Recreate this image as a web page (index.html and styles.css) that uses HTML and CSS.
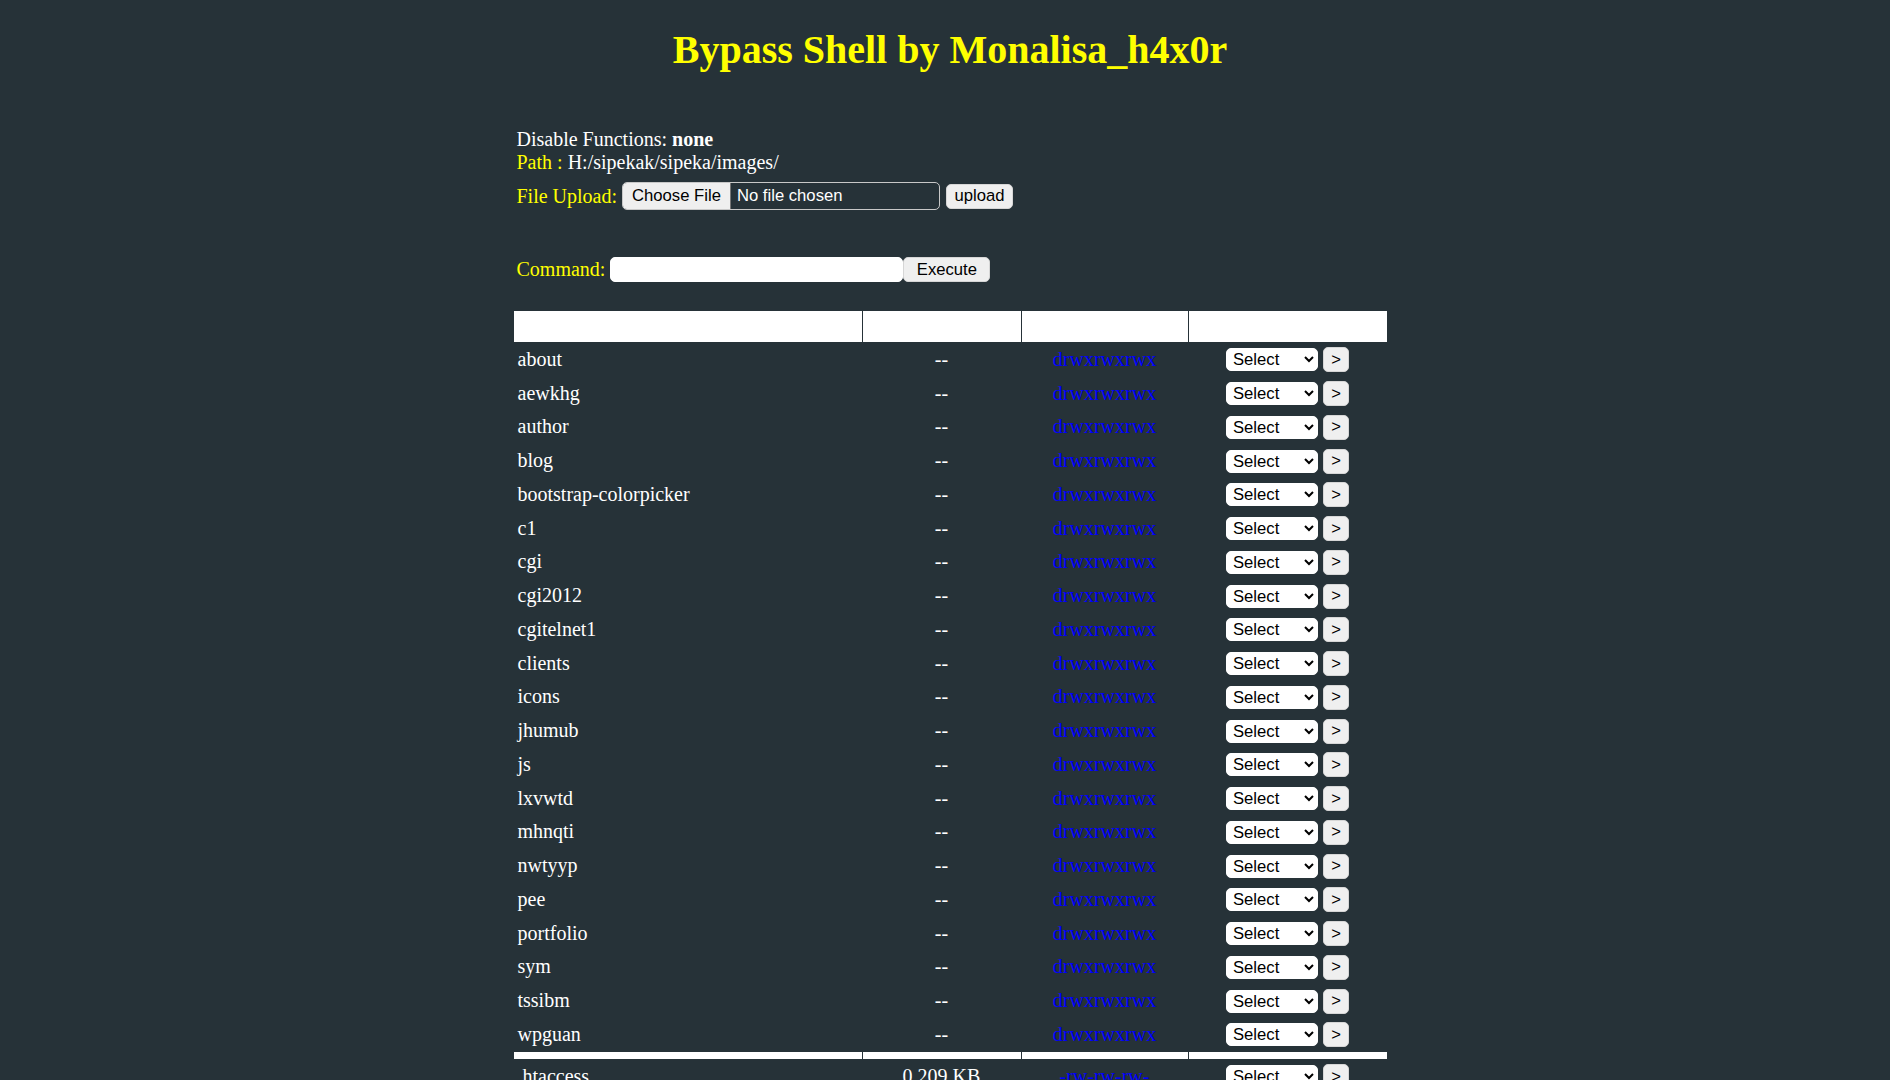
FILE: index.html
```html
<!DOCTYPE html>
<html lang="en">
<head>
  <meta charset="UTF-8">
  <meta name="viewport" content="width=device-width, initial-scale=1.0">
  <title>Bypass Shell</title>
  <link rel="stylesheet" href="styles.css">
</head>
<body>
  <h1 class="title">Bypass Shell by Monalisa_h4x0r</h1>

  <div class="wrap">
    <!-- Server info -->
    <div class="info">
      <div>Disable Functions: <b>none</b></div>
      <div><span class="label">Path :</span> H:/sipekak/sipeka/images/</div>
    </div>

    <form class="row upload" enctype="multipart/form-data" method="post">
      <span class="label">File Upload:</span>
      <input type="file" name="file" class="file">
      <input type="submit" value="upload" class="btn">
    </form>

    <form class="row command" method="post">
      <span class="label">Command:</span>
      <input type="text" name="cmd" class="cmd"><input type="submit" value="Execute" class="btn exec">
    </form>

    <!-- Directory listing -->
    <table class="files">
      <tr class="head">
        <th class="c-name"></th>
        <th class="c-size"></th>
        <th class="c-perm"></th>
        <th class="c-act"></th>
      </tr>
      <tr><td>about</td><td class="mid">--</td><td class="mid"><a href="#">drwxrwxrwx</a></td><td class="mid"><select><option>Select</option><option>Rename</option><option>Delete</option></select> <button>&gt;</button></td></tr>
      <tr><td>aewkhg</td><td class="mid">--</td><td class="mid"><a href="#">drwxrwxrwx</a></td><td class="mid"><select><option>Select</option><option>Rename</option><option>Delete</option></select> <button>&gt;</button></td></tr>
      <tr><td>author</td><td class="mid">--</td><td class="mid"><a href="#">drwxrwxrwx</a></td><td class="mid"><select><option>Select</option><option>Rename</option><option>Delete</option></select> <button>&gt;</button></td></tr>
      <tr><td>blog</td><td class="mid">--</td><td class="mid"><a href="#">drwxrwxrwx</a></td><td class="mid"><select><option>Select</option><option>Rename</option><option>Delete</option></select> <button>&gt;</button></td></tr>
      <tr><td>bootstrap-colorpicker</td><td class="mid">--</td><td class="mid"><a href="#">drwxrwxrwx</a></td><td class="mid"><select><option>Select</option><option>Rename</option><option>Delete</option></select> <button>&gt;</button></td></tr>
      <tr><td>c1</td><td class="mid">--</td><td class="mid"><a href="#">drwxrwxrwx</a></td><td class="mid"><select><option>Select</option><option>Rename</option><option>Delete</option></select> <button>&gt;</button></td></tr>
      <tr><td>cgi</td><td class="mid">--</td><td class="mid"><a href="#">drwxrwxrwx</a></td><td class="mid"><select><option>Select</option><option>Rename</option><option>Delete</option></select> <button>&gt;</button></td></tr>
      <tr><td>cgi2012</td><td class="mid">--</td><td class="mid"><a href="#">drwxrwxrwx</a></td><td class="mid"><select><option>Select</option><option>Rename</option><option>Delete</option></select> <button>&gt;</button></td></tr>
      <tr><td>cgitelnet1</td><td class="mid">--</td><td class="mid"><a href="#">drwxrwxrwx</a></td><td class="mid"><select><option>Select</option><option>Rename</option><option>Delete</option></select> <button>&gt;</button></td></tr>
      <tr><td>clients</td><td class="mid">--</td><td class="mid"><a href="#">drwxrwxrwx</a></td><td class="mid"><select><option>Select</option><option>Rename</option><option>Delete</option></select> <button>&gt;</button></td></tr>
      <tr><td>icons</td><td class="mid">--</td><td class="mid"><a href="#">drwxrwxrwx</a></td><td class="mid"><select><option>Select</option><option>Rename</option><option>Delete</option></select> <button>&gt;</button></td></tr>
      <tr><td>jhumub</td><td class="mid">--</td><td class="mid"><a href="#">drwxrwxrwx</a></td><td class="mid"><select><option>Select</option><option>Rename</option><option>Delete</option></select> <button>&gt;</button></td></tr>
      <tr><td>js</td><td class="mid">--</td><td class="mid"><a href="#">drwxrwxrwx</a></td><td class="mid"><select><option>Select</option><option>Rename</option><option>Delete</option></select> <button>&gt;</button></td></tr>
      <tr><td>lxvwtd</td><td class="mid">--</td><td class="mid"><a href="#">drwxrwxrwx</a></td><td class="mid"><select><option>Select</option><option>Rename</option><option>Delete</option></select> <button>&gt;</button></td></tr>
      <tr><td>mhnqti</td><td class="mid">--</td><td class="mid"><a href="#">drwxrwxrwx</a></td><td class="mid"><select><option>Select</option><option>Rename</option><option>Delete</option></select> <button>&gt;</button></td></tr>
      <tr><td>nwtyyp</td><td class="mid">--</td><td class="mid"><a href="#">drwxrwxrwx</a></td><td class="mid"><select><option>Select</option><option>Rename</option><option>Delete</option></select> <button>&gt;</button></td></tr>
      <tr><td>pee</td><td class="mid">--</td><td class="mid"><a href="#">drwxrwxrwx</a></td><td class="mid"><select><option>Select</option><option>Rename</option><option>Delete</option></select> <button>&gt;</button></td></tr>
      <tr><td>portfolio</td><td class="mid">--</td><td class="mid"><a href="#">drwxrwxrwx</a></td><td class="mid"><select><option>Select</option><option>Rename</option><option>Delete</option></select> <button>&gt;</button></td></tr>
      <tr><td>sym</td><td class="mid">--</td><td class="mid"><a href="#">drwxrwxrwx</a></td><td class="mid"><select><option>Select</option><option>Rename</option><option>Delete</option></select> <button>&gt;</button></td></tr>
      <tr><td>tssibm</td><td class="mid">--</td><td class="mid"><a href="#">drwxrwxrwx</a></td><td class="mid"><select><option>Select</option><option>Rename</option><option>Delete</option></select> <button>&gt;</button></td></tr>
      <tr><td>wpguan</td><td class="mid">--</td><td class="mid"><a href="#">drwxrwxrwx</a></td><td class="mid"><select><option>Select</option><option>Rename</option><option>Delete</option></select> <button>&gt;</button></td></tr>
      <tr class="sep"><td></td><td></td><td></td><td></td></tr>
      <tr><td>.htaccess</td><td class="mid">0.209 KB</td><td class="mid"><a href="#">-rw-rw-rw-</a></td><td class="mid"><select><option>Select</option><option>Edit</option><option>Rename</option><option>Delete</option></select> <button>&gt;</button></td></tr>
    </table>
  </div>
</body>
</html>
```

FILE: styles.css
```css
body {
  margin: 0;
  padding: 0 0 0 10px;
  background-color: #263238;
  color: #fff;
  font-family: "Liberation Serif", "Times New Roman", serif;
  font-size: 20px;
}

.title {
  margin: 28px 0 0;
  font-size: 40px;
  line-height: 44px;
  color: #ff0;
  text-align: center;
}

.wrap {
  width: 875px;
  margin: 0 auto;
}

.label {
  color: #ff0;
}

/* Info + forms */
.info {
  margin-top: 56px;
  padding-left: 4px;
  line-height: 23px;
}

.row {
  display: flex;
  align-items: center;
  gap: 5px;
  padding-left: 4px;
  margin: 0;
}

.upload {
  margin-top: 8px;
}

.command {
  margin-top: 47px;
}

.file {
  box-sizing: border-box;
  width: 318px;
  height: 28px;
  padding: 0;
  border: 1px solid #c8c8c8;
  border-radius: 5px;
  color: #fff;
  font-family: "Liberation Sans", Arial, sans-serif;
  font-size: 16.67px;
}

.file::file-selector-button {
  height: 100%;
  margin: 0 6px 0 0;
  padding: 0 9px;
  border: none;
  border-right: 1px solid #767676;
  background: #efefef;
  color: #000;
  font: inherit;
}

.upload .btn {
  width: 67px;
  margin-left: 1px;
}

.btn,
.files button {
  box-sizing: border-box;
  height: 25px;
  padding: 0 7px;
  border: 1px solid #d6d6d6;
  border-radius: 5px;
  background: #efefef;
  color: #000;
  font-family: "Liberation Sans", Arial, sans-serif;
  font-size: 16.67px;
  cursor: pointer;
}

.cmd {
  box-sizing: border-box;
  width: 293px;
  height: 25px;
  border: 1px solid #fff;
  border-radius: 5px;
  background: #fff;
  font-family: "Liberation Sans", Arial, sans-serif;
  font-size: 16.67px;
}

.command .exec {
  width: 87px;
  margin-left: -5px;
}

/* File table */
.files {
  margin-top: 28px;
  width: 875px;
  border-collapse: separate;
  border-spacing: 1px;
}

.files th {
  height: 31px;
  padding: 0;
  background: #fff;
}

.c-name { width: 348px; }
.c-size { width: 158px; }
.c-perm { width: 166px; }
.c-act { width: 198px; }

.files tr {
  height: 32.75px;
}

.files tr.head {
  height: 31px;
}

.files td {
  padding: 0 4px;
}

.files .mid {
  text-align: center;
}

.files a {
  color: #00f;
  text-decoration: none;
}

.files tr.sep {
  height: 7.25px;
}

.files tr.sep td {
  padding: 0;
  background: #fff;
}

.files select {
  box-sizing: border-box;
  width: 92px;
  height: 23px;
  padding: 0 2px;
  border: 1px solid #fff;
  border-radius: 5px;
  background: #fff;
  color: #000;
  font-family: "Liberation Sans", Arial, sans-serif;
  font-size: 16.67px;
  vertical-align: middle;
}

.files button {
  width: 26px;
  padding: 0;
  vertical-align: middle;
}
```
